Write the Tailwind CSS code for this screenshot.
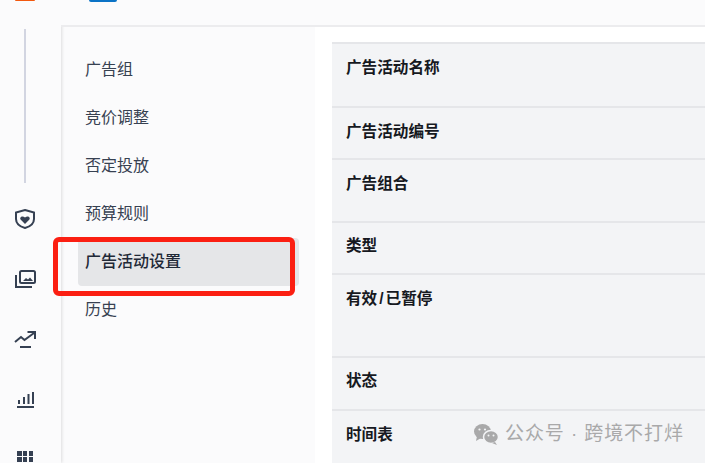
<!doctype html>
<html lang="zh">
  <head>
    <meta charset="UTF-8" />
    <script src="https://cdn.jsdelivr.net/npm/@tailwindcss/browser@4"></script>
    <title>广告活动设置</title>
  </head>

  <body class="relative h-[463px] w-[705px] overflow-hidden bg-white font-['Liberation_Sans','Noto_Sans_CJK_SC',sans-serif] text-[16px] leading-[24px] text-[#1f2937]">
    <div class="flex h-full">
      <!-- icon rail -->
      <aside class="relative flex h-full w-[61px] shrink-0 flex-col items-start bg-[#fbfbfc] shadow-[1px_0_3px_rgba(0,0,0,0.12)]">
        <div class="ml-[15px] h-[1px] w-[20px] rounded-b bg-[#f2590f]"></div>
        <div class="mt-[28px] ml-[24px] h-[154px] w-[2px] bg-[#d2d5e1]"></div>
        <svg class="mt-[26px] ml-[14px]" width="22" height="20" viewBox="0 0 22 20" fill="none" stroke="#354052" stroke-width="2"><path d="M11 1l9 2.600v6.400c0 4.500-4 7.600-9 9-5-1.400-9-4.500-9-9V3.600z"/><path d="M11 15l-4.200-4.200c-1.800-2.200 1.200-4.800 4.200-2.300 3-2.500 6 .1 4.200 2.300z" fill="#354052" stroke="none"/></svg>
        <svg class="mt-[41px] ml-[14px]" width="22" height="19" viewBox="0 0 22 19" fill="none" stroke="#354052" stroke-width="2"><rect x="6" y="1" width="15" height="12" rx="1.500"/><path d="M2 5v12h16"/><path d="M9 11l3-3 2 1.500 2-2 3 3.500z" fill="#354052" stroke="none"/></svg>
        <svg class="mt-[42px] ml-[14px]" width="22" height="18" viewBox="0 0 22 18" fill="none" stroke="#354052" stroke-width="2"><path d="M1 11l6-5 3.500 3L20 2"/><path d="M13.500 1H21v7"/><path d="M6 16h11"/></svg>
        <svg class="mt-[42px] ml-[17px]" width="17" height="17" viewBox="0 0 17 17" fill="none" stroke="#354052" stroke-width="2"><path d="M0 16h17"/><path d="M2 13V9M7 13V6M11.500 13V3M16 13V1"/></svg>
        <div class="mt-[43px] ml-[17px] grid w-[16px] grid-cols-3 gap-[1.500px]">
          <span class="h-[4.500px] w-[4.500px] bg-[#354052]"></span><span class="h-[4.500px] w-[4.500px] bg-[#354052]"></span><span class="h-[4.500px] w-[4.500px] bg-[#354052]"></span>
          <span class="h-[4.500px] w-[4.500px] bg-[#354052]"></span><span class="h-[4.500px] w-[4.500px] bg-[#354052]"></span><span class="h-[4.500px] w-[4.500px] bg-[#354052]"></span>
        </div>
      </aside>

      <div class="flex min-w-0 flex-1 flex-col">
        <header class="relative h-[27px] shrink-0 border-b-2 border-[#ececee] bg-[#fbfbfc]">
          <div class="ml-[28px] h-[2px] w-[28px] rounded-b-md bg-[#0b73c6]"></div>
        </header>

        <div class="flex min-h-0 flex-1">
          <!-- settings nav -->
          <nav class="flex w-[254px] shrink-0 flex-col bg-[#fbfbfc] pt-[19px] pl-[17px] pr-[16px]">
            <a class="flex h-[48px] items-center rounded-[4px] px-[7px] text-[#374151]">广告组</a>
            <a class="flex h-[48px] items-center rounded-[4px] px-[7px] text-[#374151]">竞价调整</a>
            <a class="flex h-[48px] items-center rounded-[4px] px-[7px] text-[#374151]">否定投放</a>
            <a class="flex h-[48px] items-center rounded-[4px] px-[7px] text-[#374151]">预算规则</a>
            <a class="flex h-[48px] items-center rounded-[4px] bg-[#e5e6e8] px-[7px] font-medium text-[#1f2937]">广告活动设置</a>
            <a class="flex h-[48px] items-center rounded-[4px] px-[7px] text-[#374151]">历史</a>
          </nav>

          <!-- settings table -->
          <main class="min-w-0 flex-1 pt-[15px] pl-[17px]">
            <div class="h-full bg-[#f3f4f6] text-[15.600px] font-bold text-[#16191f]">
              <div class="h-[64px] border-t-2 border-[#e5e6e9] pt-[12px] pl-[14px]">广告活动名称</div>
              <div class="h-[52px] border-t-2 border-[#e5e6e9] pt-[12px] pl-[14px]">广告活动编号</div>
              <div class="h-[63px] border-t-2 border-[#e5e6e9] pt-[12px] pl-[14px]">广告组合</div>
              <div class="h-[52px] border-t-2 border-[#e5e6e9] pt-[11px] pl-[14px]">类型</div>
              <div class="h-[83px] border-t-2 border-[#e5e6e9] pt-[12px] pl-[14px]">有效<span class="px-[2px]">/</span>已暂停</div>
              <div class="h-[53px] border-t-2 border-[#e5e6e9] pt-[11px] pl-[14px]">状态</div>
              <div class="h-[52px] border-t-2 border-[#e5e6e9] pt-[12px] pl-[14px]">时间表</div>
            </div>
          </main>
        </div>
      </div>
    </div>

    <!-- red annotation -->
    <div class="absolute top-[237px] left-[53px] h-[59px] w-[242px] rounded-[6px] border-[5px] border-[#fb1f12]"></div>

    <!-- watermark -->
    <div class="absolute top-[421px] left-[473px] flex items-center text-[19px] leading-[26px] tracking-[0.9px] text-[#a9a9aa]">
      <svg width="27" height="22" viewBox="0 0 27 22" fill="#a9a9aa">
        <ellipse cx="9.500" cy="8.500" rx="8.500" ry="7.500"/>
        <path d="M4 13l-1 5 5-3z"/>
        <ellipse cx="18" cy="14" rx="7.500" ry="6.500" stroke="#f3f4f6" stroke-width="1.500"/>
        <path d="M22 19l2 3-5-2z"/>
        <circle cx="6.500" cy="6.500" r="1.100" fill="#f3f4f6"/><circle cx="12" cy="6.500" r="1.100" fill="#f3f4f6"/>
        <circle cx="15.500" cy="12.500" r="1" fill="#f3f4f6"/><circle cx="20.500" cy="12.500" r="1" fill="#f3f4f6"/>
      </svg>
      <span class="ml-[5px] whitespace-nowrap">公众号 · 跨境不打烊</span>
    </div>
  </body>
</html>
